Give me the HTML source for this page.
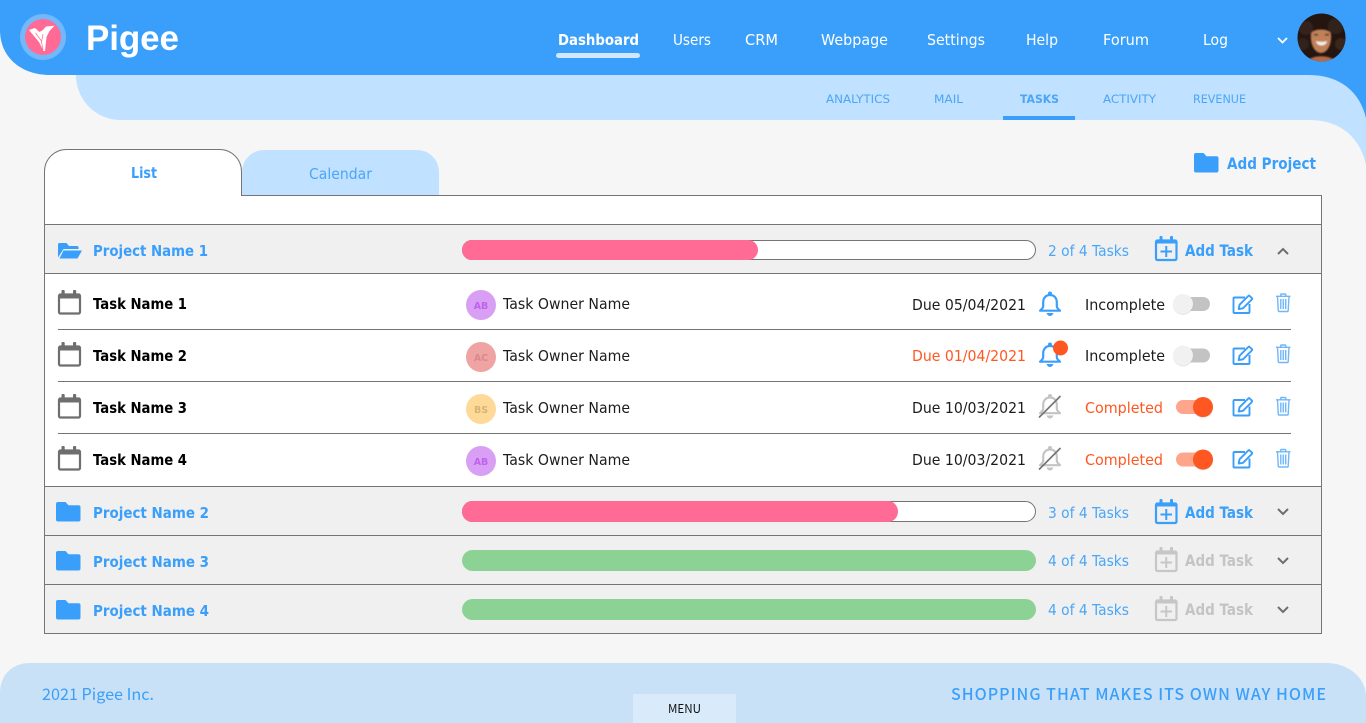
<!DOCTYPE html>
<html lang="en"><head><meta charset="utf-8"><title>Pigee</title>
<style>
html,body{margin:0;padding:0;width:1366px;height:723px;overflow:hidden;background:#f6f6f6}
svg{display:block}
text{font-family:"DejaVu Sans",sans-serif;font-size:15px}
.b{font-weight:700}
.nav{fill:#fff;font-size:15px}
.sub{fill:#4ba6f8;font-size:11.5px}
.tn{fill:#000;font-weight:700;font-size:15px}
.own{fill:#1c1c1c;font-size:15px}
.pn{fill:#3a9ffa;font-weight:700;font-size:15px}
.cnt{fill:#4ba6f8;font-size:15px}
.add{fill:#3a9ffa;font-weight:700;font-size:16px}
.dis{fill:#c4c4c4;font-weight:700;font-size:16px}
.foot{font-family:"Noto Sans CJK JP","Liberation Sans",sans-serif;fill:#3a9ffa}
.init{font-size:9.5px;font-weight:700}
.logo{font-family:"Liberation Sans",sans-serif;font-size:35px;font-weight:700}
</style></head><body>
<svg width="1366" height="723" viewBox="0 0 1366 723" xmlns="http://www.w3.org/2000/svg">
<defs>
<clipPath id="av"><circle cx="1321.500" cy="37.500" r="24"/></clipPath>
<filter id="soft" x="-10%" y="-10%" width="120%" height="120%"><feGaussianBlur stdDeviation=".7"/></filter>
<g id="cal"><rect x="1" y="4.500" width="21" height="19" rx="1.500" fill="none" stroke="#6e6e6e" stroke-width="2.200"/><path d="M1 3.500h21v5h-21z" fill="#6e6e6e"/><rect x="3.500" y="0" width="3.200" height="6" rx="1" fill="#6e6e6e"/><rect x="15" y="0" width="3.200" height="6" rx="1" fill="#6e6e6e"/></g>
<g id="calplus"><rect x="1" y="4.500" width="20.500" height="19.500" rx="1.500" fill="none" stroke="currentColor" stroke-width="2.200"/><path d="M1 3.500h20.500v4h-20.500z" fill="currentColor"/><rect x="4.500" y="0" width="3" height="6" rx="1" fill="currentColor"/><rect x="15" y="0" width="3" height="6" rx="1" fill="currentColor"/><path d="M11.250 10v11M5.500 15.500h11.500" stroke="currentColor" stroke-width="2" fill="none"/></g>
<path id="folder" d="M2 0h7.500l3 3.200h10a2 2 0 0 1 2 2v12.300a2 2 0 0 1-2 2h-20.500a2 2 0 0 1-2-2v-15.500a2 2 0 0 1 2-2z" fill="#3a9ffa"/>
<g id="bell"><path d="M11.500 3.500c-4.300 0-6.800 3.200-6.800 7.200v3.800c0 1.800-1.500 3.300-3.200 4.700h20c-1.700-1.400-3.200-2.900-3.200-4.700v-3.800c0-4-2.500-7.200-6.800-7.200z" fill="none" stroke="currentColor" stroke-width="2.200" stroke-linejoin="round"/><circle cx="11.500" cy="2" r="2" fill="currentColor"/><path d="M8 21.500h7c-.8 2-2 3-3.500 3s-2.700-1-3.500-3z" fill="currentColor"/></g>
<g id="edit" fill="none" stroke="#3a9ffa" stroke-width="1.900"><path d="M12 3h-10.500a1 1 0 0 0-1 1v13.500a1 1 0 0 0 1 1h14a1 1 0 0 0 1-1v-8"/><path d="M6.500 10.300l8.800-8.800a1 1 0 0 1 1.400 0l2.100 2.100a1 1 0 0 1 0 1.400l-8.800 8.800-4.300.8z" stroke-linejoin="round"/></g>
<g id="trash" fill="none" stroke="#6fb7fa" stroke-width="1.400"><path d="M0 2.800h14.500M4.700 2.500v-1.200a.8 .8 0 0 1 .8-.8h3.500a.8 .8 0 0 1 .8 .8v1.200"/><path d="M1.500 3l.8 14.200a1 1 0 0 0 1 .8h7.900a1 1 0 0 0 1-.8l.8-14.200"/><path d="M4.800 5.500v10M7.250 5.500v10M9.700 5.500v10"/></g>
<path id="chevd" d="M1 1l5 5 5-5" fill="none" stroke="#6e6e6e" stroke-width="2"/>
<g id="off"><rect x="2" y="2" width="35" height="14" rx="7" fill="#c3c3c3"/><circle cx="10" cy="9" r="10" fill="#000" opacity=".12" transform="translate(0 .8)"/><circle cx="10" cy="9" r="10" fill="#f1f1f1"/></g>
<g id="on"><rect x="3" y="3" width="36" height="14" rx="7" fill="#ffa58c"/><circle cx="30" cy="10" r="10" fill="#000" opacity=".12" transform="translate(0 .8)"/><circle cx="30" cy="10" r="10" fill="#ff5722"/></g>
</defs>

<rect width="1366" height="723" fill="#f6f6f6"/>
<!-- sub-nav band -->
<path d="M76 60H1366V165C1360 137 1340 120 1309 120H121C96 120 76 100 76 75z" fill="#c0e1ff"/>
<!-- header -->
<path d="M0 0H1366V118C1360 92 1340 75 1309 75H50C22 75 0 58 0 30z" fill="#3a9ffa"/>
<!-- logo -->
<circle cx="43" cy="37" r="23" fill="#72b8fb"/>
<circle cx="43" cy="37" r="18" fill="#ff6b95"/>
<path d="M29 30l6-2 4.500 4 3.500-2 3-3.500 8.500-.8-5 5.300-3 6-1.500 14-1.500 0-4.500-9-5.500-6.500z" fill="#fff"/>
<path d="M43 34l-1.500 8 1.500 8M35.500 33l6 8" stroke="#ff6b95" stroke-width=".7" fill="none"/>
<text x="86" y="50" fill="#fff" class="logo" textLength="93" lengthAdjust="spacing">Pigee</text>

<!-- nav -->
<text x="558" y="45" class="nav b" textLength="81" lengthAdjust="spacingAndGlyphs">Dashboard</text>
<rect x="556" y="53" width="84" height="5" rx="2.500" fill="#d0e8fe"/>
<text x="673" y="45" class="nav" textLength="38" lengthAdjust="spacingAndGlyphs">Users</text>
<text x="745" y="45" class="nav" textLength="33" lengthAdjust="spacingAndGlyphs">CRM</text>
<text x="821" y="45" class="nav" textLength="67" lengthAdjust="spacingAndGlyphs">Webpage</text>
<text x="927" y="45" class="nav" textLength="58" lengthAdjust="spacingAndGlyphs">Settings</text>
<text x="1026" y="45" class="nav" textLength="32" lengthAdjust="spacingAndGlyphs">Help</text>
<text x="1103" y="45" class="nav" textLength="46" lengthAdjust="spacingAndGlyphs">Forum</text>
<text x="1203" y="45" class="nav" textLength="25" lengthAdjust="spacingAndGlyphs">Log</text>
<path d="M1278 38l4.500 4.500 4.500-4.500" fill="none" stroke="#fff" stroke-width="1.800"/>
<!-- avatar -->
<circle cx="1321.500" cy="37.500" r="24" fill="#241510"/>
<g clip-path="url(#av)"><g filter="url(#soft)">
<circle cx="1306" cy="28" r="7" fill="#35221a"/><circle cx="1336" cy="26" r="8" fill="#33201a"/><circle cx="1303" cy="44" r="6" fill="#33201a"/><circle cx="1341" cy="44" r="6" fill="#3a261c"/>
<path d="M1311 34c1-6 19-6 20 0 1 9-3 19-10 19s-11-10-10-19z" fill="#c08058"/>
<path d="M1306 63c3-9 27-9 31 0z" fill="#b56a45"/>
<path d="M1316 41c3 1 8 1 11 0-.5 6-10.500 6-11 0z" fill="#f4ece8"/>
<rect x="1314" y="34" width="4" height="1.500" fill="#3a2018"/><rect x="1325" y="34" width="4" height="1.500" fill="#3a2018"/>
</g></g>

<!-- sub nav -->
<text x="826" y="103" class="sub" textLength="64" lengthAdjust="spacingAndGlyphs">ANALYTICS</text>
<text x="934" y="103" class="sub" textLength="29" lengthAdjust="spacingAndGlyphs">MAIL</text>
<text x="1020" y="103" class="sub b" textLength="39" lengthAdjust="spacingAndGlyphs">TASKS</text>
<text x="1103" y="103" class="sub" textLength="53" lengthAdjust="spacingAndGlyphs">ACTIVITY</text>
<text x="1193" y="103" class="sub" textLength="53" lengthAdjust="spacingAndGlyphs">REVENUE</text>
<rect x="1003" y="116" width="72" height="4" fill="#3a9ffa"/>

<!-- Add project -->
<use href="#folder" x="1194" y="153"/>
<text x="1227" y="169" class="add" textLength="89" lengthAdjust="spacingAndGlyphs">Add Project</text>

<!-- panel -->
<path d="M242 195V172a22 22 0 0 1 22-22h153a22 22 0 0 1 22 22v23z" fill="#c0e1ff"/>
<rect x="44.500" y="195.500" width="1277" height="438" fill="#fff" stroke="#757575"/>
<!-- tabs -->
<path d="M44.500 196V171.500a22 22 0 0 1 22-22h153a22 22 0 0 1 22 22v24" fill="#fff" stroke="#757575"/>
<rect x="45" y="195" width="196" height="2" fill="#fff"/>
<text x="131" y="178" class="pn" textLength="26" lengthAdjust="spacingAndGlyphs">List</text>
<text x="309" y="179" class="cnt" textLength="63" lengthAdjust="spacingAndGlyphs">Calendar</text>

<!-- project rows -->
<rect x="45" y="225" width="1276" height="48" fill="#f0f0f0"/>
<rect x="45" y="487" width="1276" height="146" fill="#f0f0f0"/>
<path d="M45 224.500H1321M45 273.500H1321M45 486.500H1321M45 535.500H1321M45 584.500H1321" stroke="#757575"/>
<path d="M58 329.500H1291M58 381.500H1291M58 433.500H1291" stroke="#757575"/>

<!-- row 1 -->
<path d="M59.500 243h7l2.500 3h8a1.500 1.500 0 0 1 1.500 1.500v1.500h-15l-5.500 8.500v-13a1.500 1.500 0 0 1 1.500-1.500z" fill="#3a9ffa"/>
<path d="M63.500 250.500h18.500l-4.500 8h-18z" fill="#3a9ffa"/>
<text x="93" y="256" class="pn" textLength="115" lengthAdjust="spacingAndGlyphs">Project Name 1</text>
<rect x="462.500" y="240.500" width="573" height="19" rx="9.500" fill="#fff" stroke="#757575"/>
<path d="M472 240H748a10 10 0 0 1 0 20H472a10 10 0 0 1 0-20z" fill="#ff6b95"/>
<text x="1048" y="256" class="cnt" textLength="81" lengthAdjust="spacingAndGlyphs">2 of 4 Tasks</text>
<use href="#calplus" x="1155" y="236" color="#3a9ffa"/>
<text x="1185" y="256" class="add" textLength="68" lengthAdjust="spacingAndGlyphs">Add Task</text>
<path d="M1278 254l5-5 5 5" fill="none" stroke="#6e6e6e" stroke-width="2"/>

<!-- tasks -->
<use href="#cal" x="58" y="290"/>
<text x="93" y="309" class="tn" textLength="94" lengthAdjust="spacingAndGlyphs">Task Name 1</text>
<circle cx="481" cy="305" r="15" fill="#d89ff5"/>
<text x="481" y="309" text-anchor="middle" class="init" fill="#c062ee">AB</text>
<text x="503" y="309" class="own" textLength="127" lengthAdjust="spacingAndGlyphs">Task Owner Name</text>
<text x="912" y="310" class="own" textLength="114" lengthAdjust="spacingAndGlyphs">Due 05/04/2021</text>
<use href="#bell" x="1038.500" y="291.500" color="#3a9ffa"/>
<text x="1085" y="310" class="own" textLength="80" lengthAdjust="spacingAndGlyphs">Incomplete</text>
<use href="#off" x="1173" y="295"/>
<use href="#edit" x="1233" y="294.500"/>
<use href="#trash" x="1276" y="293.500"/>

<use href="#cal" x="58" y="342"/>
<text x="93" y="361" class="tn" textLength="94" lengthAdjust="spacingAndGlyphs">Task Name 2</text>
<circle cx="481" cy="357" r="15" fill="#f0a3a3"/>
<text x="481" y="361" text-anchor="middle" class="init" fill="#d88a8a">AC</text>
<text x="503" y="361" class="own" textLength="127" lengthAdjust="spacingAndGlyphs">Task Owner Name</text>
<text x="912" y="361" fill="#ff5722" textLength="114" lengthAdjust="spacingAndGlyphs">Due 01/04/2021</text>
<use href="#bell" x="1038.500" y="342.500" color="#3a9ffa"/>
<circle cx="1060.500" cy="348" r="7.500" fill="#ff5722"/>
<text x="1085" y="361" class="own" textLength="80" lengthAdjust="spacingAndGlyphs">Incomplete</text>
<use href="#off" x="1173" y="346.500"/>
<use href="#edit" x="1233" y="345.500"/>
<use href="#trash" x="1276" y="344.500"/>

<use href="#cal" x="58" y="394"/>
<text x="93" y="413" class="tn" textLength="94" lengthAdjust="spacingAndGlyphs">Task Name 3</text>
<circle cx="481" cy="409" r="15" fill="#ffd998"/>
<text x="481" y="413" text-anchor="middle" class="init" fill="#d6b574">BS</text>
<text x="503" y="413" class="own" textLength="127" lengthAdjust="spacingAndGlyphs">Task Owner Name</text>
<text x="912" y="413" class="own" textLength="114" lengthAdjust="spacingAndGlyphs">Due 10/03/2021</text>
<use href="#bell" x="1038.500" y="394" color="#c4c4c4"/>
<path d="M1039 417.500l21.500-21.500" stroke="#757575" stroke-width="1.700"/>
<text x="1085" y="413" fill="#ff5722" textLength="78" lengthAdjust="spacingAndGlyphs">Completed</text>
<use href="#on" x="1173" y="397"/>
<use href="#edit" x="1233" y="397"/>
<use href="#trash" x="1276" y="397"/>

<use href="#cal" x="58" y="446"/>
<text x="93" y="465" class="tn" textLength="94" lengthAdjust="spacingAndGlyphs">Task Name 4</text>
<circle cx="481" cy="461" r="15" fill="#d89ff5"/>
<text x="481" y="465" text-anchor="middle" class="init" fill="#c062ee">AB</text>
<text x="503" y="465" class="own" textLength="127" lengthAdjust="spacingAndGlyphs">Task Owner Name</text>
<text x="912" y="465" class="own" textLength="114" lengthAdjust="spacingAndGlyphs">Due 10/03/2021</text>
<use href="#bell" x="1038.500" y="446" color="#c4c4c4"/>
<path d="M1039 469.500l21.500-21.500" stroke="#757575" stroke-width="1.700"/>
<text x="1085" y="465" fill="#ff5722" textLength="78" lengthAdjust="spacingAndGlyphs">Completed</text>
<use href="#on" x="1173" y="449.500"/>
<use href="#edit" x="1233" y="449"/>
<use href="#trash" x="1276" y="449"/>

<!-- project 2 -->
<use href="#folder" x="56" y="502"/>
<text x="93" y="518" class="pn" textLength="116" lengthAdjust="spacingAndGlyphs">Project Name 2</text>
<rect x="462.500" y="501.500" width="573" height="20" rx="10" fill="#fff" stroke="#757575"/>
<path d="M472 501H888a10 10.500 0 0 1 0 21H472a10 10.500 0 0 1 0-21z" fill="#ff6b95"/>
<text x="1048" y="518" class="cnt" textLength="81" lengthAdjust="spacingAndGlyphs">3 of 4 Tasks</text>
<use href="#calplus" x="1155" y="499" color="#3a9ffa"/>
<text x="1185" y="518" class="add" textLength="68" lengthAdjust="spacingAndGlyphs">Add Task</text>
<use href="#chevd" x="1277" y="508"/>

<!-- project 3 -->
<use href="#folder" x="56" y="551"/>
<text x="93" y="567" class="pn" textLength="116" lengthAdjust="spacingAndGlyphs">Project Name 3</text>
<rect x="462" y="550" width="574" height="21" rx="10.500" fill="#8dd295"/>
<text x="1048" y="566" class="cnt" textLength="81" lengthAdjust="spacingAndGlyphs">4 of 4 Tasks</text>
<use href="#calplus" x="1155" y="547" color="#c6c6c6"/>
<text x="1185" y="566" class="dis" textLength="68" lengthAdjust="spacingAndGlyphs">Add Task</text>
<use href="#chevd" x="1277" y="557"/>

<!-- project 4 -->
<use href="#folder" x="56" y="600"/>
<text x="93" y="616" class="pn" textLength="116" lengthAdjust="spacingAndGlyphs">Project Name 4</text>
<rect x="462" y="599" width="574" height="21" rx="10.500" fill="#8dd295"/>
<text x="1048" y="615" class="cnt" textLength="81" lengthAdjust="spacingAndGlyphs">4 of 4 Tasks</text>
<use href="#calplus" x="1155" y="596" color="#c6c6c6"/>
<text x="1185" y="615" class="dis" textLength="68" lengthAdjust="spacingAndGlyphs">Add Task</text>
<use href="#chevd" x="1277" y="606"/>

<!-- footer -->
<path d="M0 723V693c0-18 12-30 30-30H1326c22 0 40 14 40 34V723z" fill="#c9e1f7"/>
<text x="42" y="700" class="foot" style="font-size:16px" textLength="112" lengthAdjust="spacingAndGlyphs">2021 Pigee Inc.</text>
<text x="951" y="700" class="foot" style="font-size:16px;font-weight:500;letter-spacing:1px" textLength="376" lengthAdjust="spacingAndGlyphs">SHOPPING THAT MAKES ITS OWN WAY HOME</text>
<rect x="633" y="694" width="103" height="29" fill="#d9eafb"/>
<text x="668" y="713" class="foot" style="font-size:12px;fill:#111" textLength="33" lengthAdjust="spacingAndGlyphs">MENU</text>
</svg>
</body></html>
